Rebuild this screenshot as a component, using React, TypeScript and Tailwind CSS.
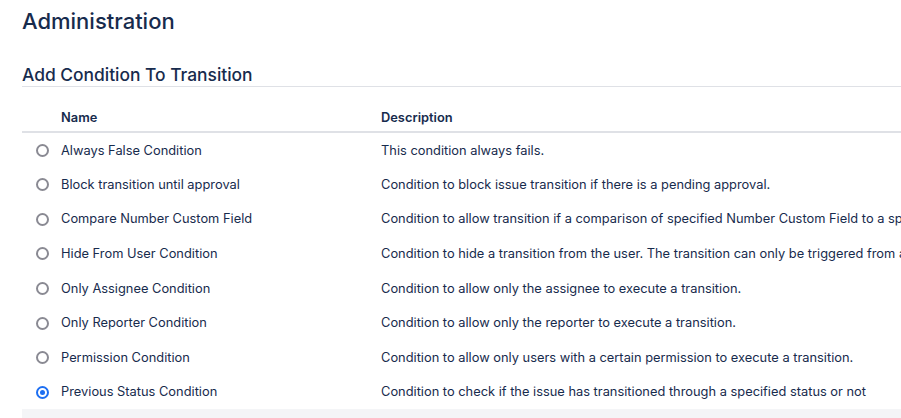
const conditions = [
    {name: "Always False Condition", description: "This condition always fails."},
    {name: "Block transition until approval", description: "Condition to block issue transition if there is a pending approval."},
    {name: "Compare Number Custom Field", description: "Condition to allow transition if a comparison of specified Number Custom Field to a specified value is true."},
    {name: "Hide From User Condition", description: "Condition to hide a transition from the user. The transition can only be triggered from a workflow function or from a REST call."},
    {name: "Only Assignee Condition", description: "Condition to allow only the assignee to execute a transition."},
    {name: "Only Reporter Condition", description: "Condition to allow only the reporter to execute a transition."},
    {name: "Permission Condition", description: "Condition to allow only users with a certain permission to execute a transition."},
    {name: "Previous Status Condition", description: "Condition to check if the issue has transitioned through a specified status or not"},
];

const Radio = ({checked}: {checked: boolean}) => (
    <span
        className={`flex items-center justify-center w-[13px] h-[13px] rounded-full border-2 bg-white ${
            checked ? "border-[#1d6ff2]" : "border-[#8a8a93]"
        }`}
    >
        {checked && <span className="block w-[5px] h-[5px] rounded-full bg-[#1d6ff2]"/>}
    </span>
);

const App = () => {
    const selected = 7;

    return (
        <div className="w-[901px] h-[418px] overflow-hidden bg-white text-[#172b4d] font-['Inter','Helvetica',sans-serif]">
            <div className="pl-[22px]">
                {/* page title */}
                <h1 className="pt-[7px] text-[22px] leading-[28px] font-medium">
                    Administration
                </h1>

                <h2 className="mt-[31px] text-[17.4px] leading-[18px] font-medium pb-[2px] border-b border-[#dfe1e6]">
                    Add Condition To Transition
                </h2>

                <table className="mt-[21px] w-[1100px] table-fixed text-[12.85px] border-collapse">
                    <colgroup>
                        <col className="w-[39px]"/>
                        <col className="w-[320px]"/>
                        <col/>
                    </colgroup>
                    <thead>
                        <tr className="border-b-2 border-[#dfe1e6]">
                            <th className="p-0"/>
                            <th className="p-0 pb-[3px] text-left font-semibold leading-[20px]">Name</th>
                            <th className="p-0 pb-[3px] text-left font-semibold leading-[20px]">Description</th>
                        </tr>
                    </thead>
                    <tbody>
                        {conditions.map((c, i) => (
                            <tr key={c.name} className="h-[34.57px]">
                                <td className="p-0 pt-[2px] pl-[14px] align-middle">
                                    <Radio checked={i === selected}/>
                                </td>
                                <td className="p-0 pt-[2px] whitespace-nowrap align-middle leading-[20px]">{c.name}</td>
                                <td className="p-0 pt-[2px] whitespace-nowrap overflow-hidden align-middle leading-[20px]">{c.description}</td>
                            </tr>
                        ))}
                    </tbody>
                </table>

                <div className="h-[20px] bg-[#f4f5f7]"/>
            </div>
        </div>
    );
};

export default App;
